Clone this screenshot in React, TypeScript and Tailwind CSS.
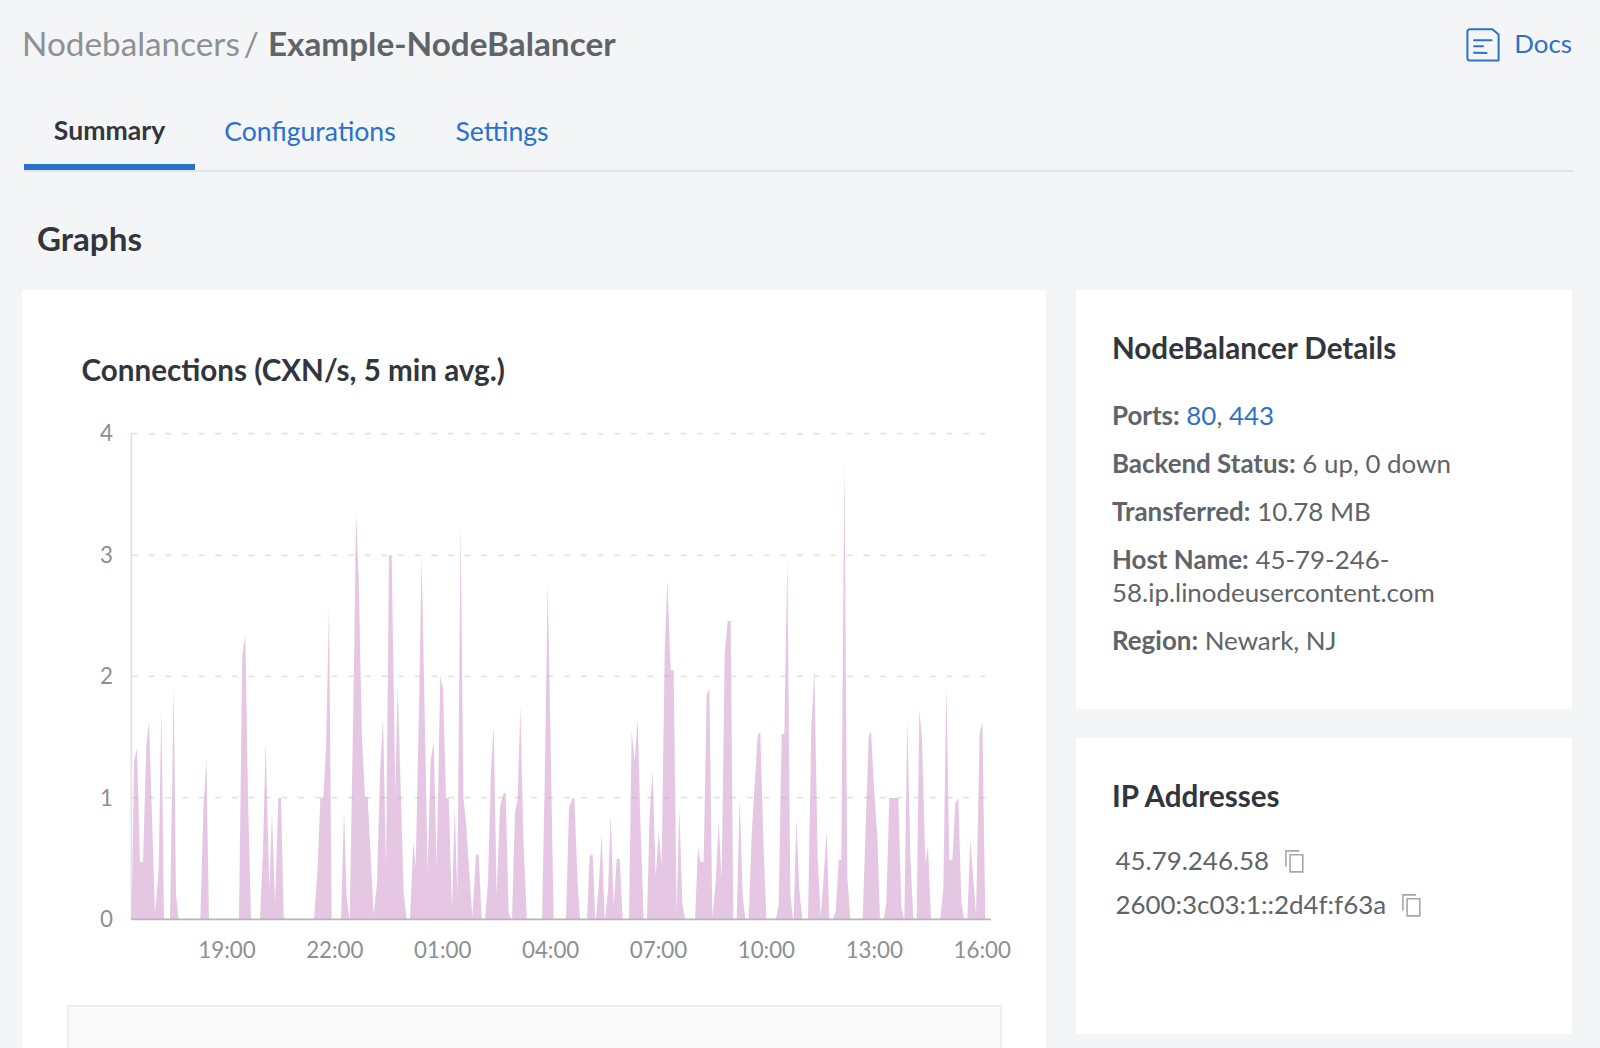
import type { ReactNode } from "react";

/* Chart drawing units: 3 per pixel, value 0 at y=1498 and value 4 at y=41. */
const areas: { shift: number; shapes: string[] }[] = [
  {
    shift: 0,
    shapes: [
      "35,1497 42,1025 51,983 60,1326 69,1326 79,975 87,902 105,1480 116,1350 124,862 132,1497",
      "150,1497 161,798 168,1425 176,1497",
      "241,1497 250,1175 259,1017 267,1497",
      "357,1497 367,705 376,645 384,1130 393,1497",
      "420,1497 429,1290 437,965 448,1410 456,1180 465,1450 475,1134 483,1134 491,1490 495,1497",
      "582,1497 593,1345 601,1134 610,1132 618,990 627,560 635,1497",
    ],
  },
  {
    shift: 540,
    shapes: [
      "123,1497 132,1172 140,1430 148,1497",
      "149,1497 162,740 168,275 176,470 186,960 195,1132 203,1132 221,1485 231,1390 240,1060 249,895 258,1340 267,406 275,406 286,1120 293,795 304,1170 311,1420 320,1497",
      "330,1497 340,1265 347,1340 357,870 365,408 383,1350 392,1020 401,965 410,1335 421,768 429,805 438,1134 446,1134 456,1465 464,1160 472,1425 482,310 490,1130 498,1210 517,1490 528,1304 536,1304 545,1497",
      "555,1497 564,1385 573,1050 581,918 590,1425 600,1160 611,1119 617,1119 626,1480 634,1497",
      "636,1497 645,1175 653,1140 661,860 670,1250 680,1497",
    ],
  },
  {
    shift: 1140,
    shapes: [
      "126,1497 135,1040 143,490 152,985 161,1497",
      "198,1497 207,1165 218,1134 223,1134 233,1390 240,1497",
      "261,1497 269,1308 278,1301 286,1497",
      "288,1497 297,1385 305,1240 314,1497",
      "315,1497 324,1415 332,1182 341,1460 350,1316 359,1316 368,1497",
      "387,1497 395,932 404,1025 413,895 421,1200 431,1497",
      "441,1497 449,1180 458,1055 467,1370 476,1238 485,1335 494,700 502,482 512,750 521,751 530,1480 538,1165 547,1450 555,1497",
    ],
  },
  {
    shift: 1620,
    shapes: [
      "105,1497 114,1283 122,1327 131,1325 140,825 148,805 157,1490 167,1390 176,1205 185,1380 194,705 203,603 212,603 220,1497",
      "230,1497 239,1135 248,1430 256,1497",
      "266,1497 275,1245 293,945 301,937 310,1260 319,1497",
      "348,1497 356,1455 365,942 373,942 382,412 391,1425 399,1497",
      "401,1497 409,1200 418,1410 427,1497",
      "444,1497 454,925 463,753 473,1310 482,1490 490,1385 500,1232 508,1497",
      "519,1497 527,1475 536,1320 544,1320 553,125 562,1370 571,1497",
      "608,1497 618,1190 626,950 633,932 643,1120 652,1250 660,1497",
    ],
  },
  {
    shift: 2100,
    shapes: [
      "191,1497 199,1450 208,1134 235,1134 244,1460 252,1497",
      "253,1497 262,898 271,1310 280,1497",
      "290,1497 298,867 306,960 316,1325 324,1280 333,1497",
      "361,1497 370,1405 379,798 388,1320 397,1320 406,1150 415,1134 424,1445 432,1497",
      "442,1497 451,1257 468,1485 479,940 487,905 496,1497",
    ],
  },
];

const gridLines = [41, 406, 769, 1133];
const hours = ["19:00", "22:00", "01:00", "04:00", "07:00", "10:00", "13:00", "16:00"];

function Chart() {
  return (
    <div className="mt-[37px] ml-[78px] w-[930px] text-[22.3px] text-[#8c8f93]">
      <div className="flex">
        <div className="-mt-[6px] flex w-[15px] flex-col gap-[94.5px] leading-[27px]">
          {["4", "3", "2", "1", "0"].map((n) => (
            <span key={n}>{n}</span>
          ))}
        </div>
        <svg viewBox="0 0 2790 1530" className="ml-[7px] -mt-[5px] h-[510px] w-[930px] shrink-0">
          {gridLines.map((y) => (
            <line key={y} x1="36" x2="2600" y1={y} y2={y} stroke="#e4e4e4" strokeWidth="5" strokeDasharray="18 31.87" />
          ))}
          <line x1="34" x2="34" y1="38" y2="1497" stroke="#e2e2e2" strokeWidth="5" />
          {areas.map(({ shift, shapes }) => (
            <g key={shift} transform={`translate(${shift} 0)`} fill="#cb90c8" fillOpacity="0.5">
              {shapes.map((points) => (
                <polygon key={points} points={points} />
              ))}
            </g>
          ))}
          <line x1="33" x2="2613" y1="1498" y2="1498" stroke="#b9b5bb" strokeWidth="5" />
        </svg>
      </div>
      <div className="mt-[4px] ml-[73px] flex w-[863px] leading-[27px]">
        {hours.map((h) => (
          <span key={h} className="w-[107.9px] shrink-0 text-center">
            {h}
          </span>
        ))}
      </div>
    </div>
  );
}

function CopyIcon() {
  return (
    <svg viewBox="0 0 19 23" className="mt-[3px] h-[23px] w-[19px] shrink-0" fill="none" stroke="#a5a7aa" strokeWidth="1.6">
      <path d="M.9 16.6V.9h13.2" />
      <path d="M5.1 4.7h12.7v17.2H5.1z" />
    </svg>
  );
}

function DocsIcon() {
  return (
    <svg viewBox="0 0 34 34" className="mt-px size-[34px]" fill="none" stroke="#2d71c9" strokeWidth="2" strokeLinecap="round">
      <path strokeLinejoin="round" d="M3.8 1.2H26.4l6.2 5.4v25.8H3.8a2.4 2.4 0 0 1-2.4-2.4V3.6a2.4 2.4 0 0 1 2.4-2.4z" />
      <path d="M8 12.3h17.5M8 18.3h9M8 24.7l12.5.2" />
    </svg>
  );
}

function Detail({ label, children }: { label: string; children: ReactNode }) {
  return (
    <p>
      <strong className="font-bold">{label}:</strong> {children}
    </p>
  );
}

export default function App() {
  return (
    <div className="h-[1048px] w-[1600px] overflow-hidden bg-[#f3f5f7] px-[22px] font-['Lato',sans-serif] text-[25.92px] text-[#606469]">
      <header className="flex h-[88px] items-center justify-between pr-[6px]">
        <h1 className="-mt-[2px] flex text-[33.3px] leading-10">
          <span className="text-[#8e9194]">Nodebalancers</span>
          <span className="ml-[4px] text-[#8e9194]">/</span>
          <span className="ml-[9px] font-bold text-[#606469]">Example-NodeBalancer</span>
        </h1>
        <a className="flex items-center gap-[14px] text-[#2d71c9]">
          <DocsIcon />
          <span className="-mt-[2px]">Docs</span>
        </a>
      </header>

      <nav className="mr-[5px] ml-[2px] flex h-[84px] items-end border-b-2 border-[#e2e4e7] text-[26.6px] text-[#2a70cf]">
        <a className="flex h-[70px] w-[171px] justify-center border-b-[6px] border-[#2872cc] pt-[14px] leading-8 font-bold text-[#32363c]">
          Summary
        </a>
        <a className="flex h-[70px] w-[230px] justify-center pt-[15px] leading-8">Configurations</a>
        <a className="flex h-[70px] w-[154px] justify-center pt-[15px] leading-8">Settings</a>
      </nav>

      <h2 className="mt-[46px] ml-[15px] text-[33.2px] leading-10 font-bold text-[#32363c]">Graphs</h2>

      <div className="mt-[32px] flex items-start gap-[29.5px]">
        <section className="w-[1024px] shrink-0 bg-white pt-[62px]">
          <h3 className="ml-[59.5px] text-[29.6px] leading-9 font-bold text-[#32363c]">Connections (CXN/s, 5 min avg.)</h3>
          <Chart />
          <div className="mt-[42px] ml-[44.5px] h-[100px] w-[935px] border-2 border-[#eeeeef] bg-[#fafafa]" />
        </section>

        <aside className="flex w-[496.5px] flex-col gap-[29px]">
          <section className="h-[419px] bg-white px-[36.5px] pt-[40px]">
            <h3 className="text-[29.6px] leading-9 font-bold text-[#32363c]">NodeBalancer Details</h3>
            <div className="mt-[33px] flex flex-col gap-[14.6px] leading-[33.4px]">
              <Detail label="Ports">
                <a className="text-[#2d71c9]">80</a>, <a className="text-[#2d71c9]">443</a>
              </Detail>
              <Detail label="Backend Status">6 up, 0 down</Detail>
              <Detail label="Transferred">10.78 MB</Detail>
              <Detail label="Host Name">
                45-79-246-
                <br />
                58.ip.linodeusercontent.com
              </Detail>
              <Detail label="Region">Newark, NJ</Detail>
            </div>
          </section>

          <section className="h-[296px] bg-white px-[36.5px] pt-[40px]">
            <h3 className="text-[29.6px] leading-9 font-bold text-[#32363c]">IP Addresses</h3>
            <div className="mt-[29.5px] ml-[3.5px] flex flex-col gap-[12px] leading-8">
              {["45.79.246.58", "2600:3c03:1::2d4f:f63a"].map((ip) => (
                <div key={ip} className="flex items-center gap-[15.5px]">
                  <span>{ip}</span>
                  <CopyIcon />
                </div>
              ))}
            </div>
          </section>
        </aside>
      </div>
    </div>
  );
}
